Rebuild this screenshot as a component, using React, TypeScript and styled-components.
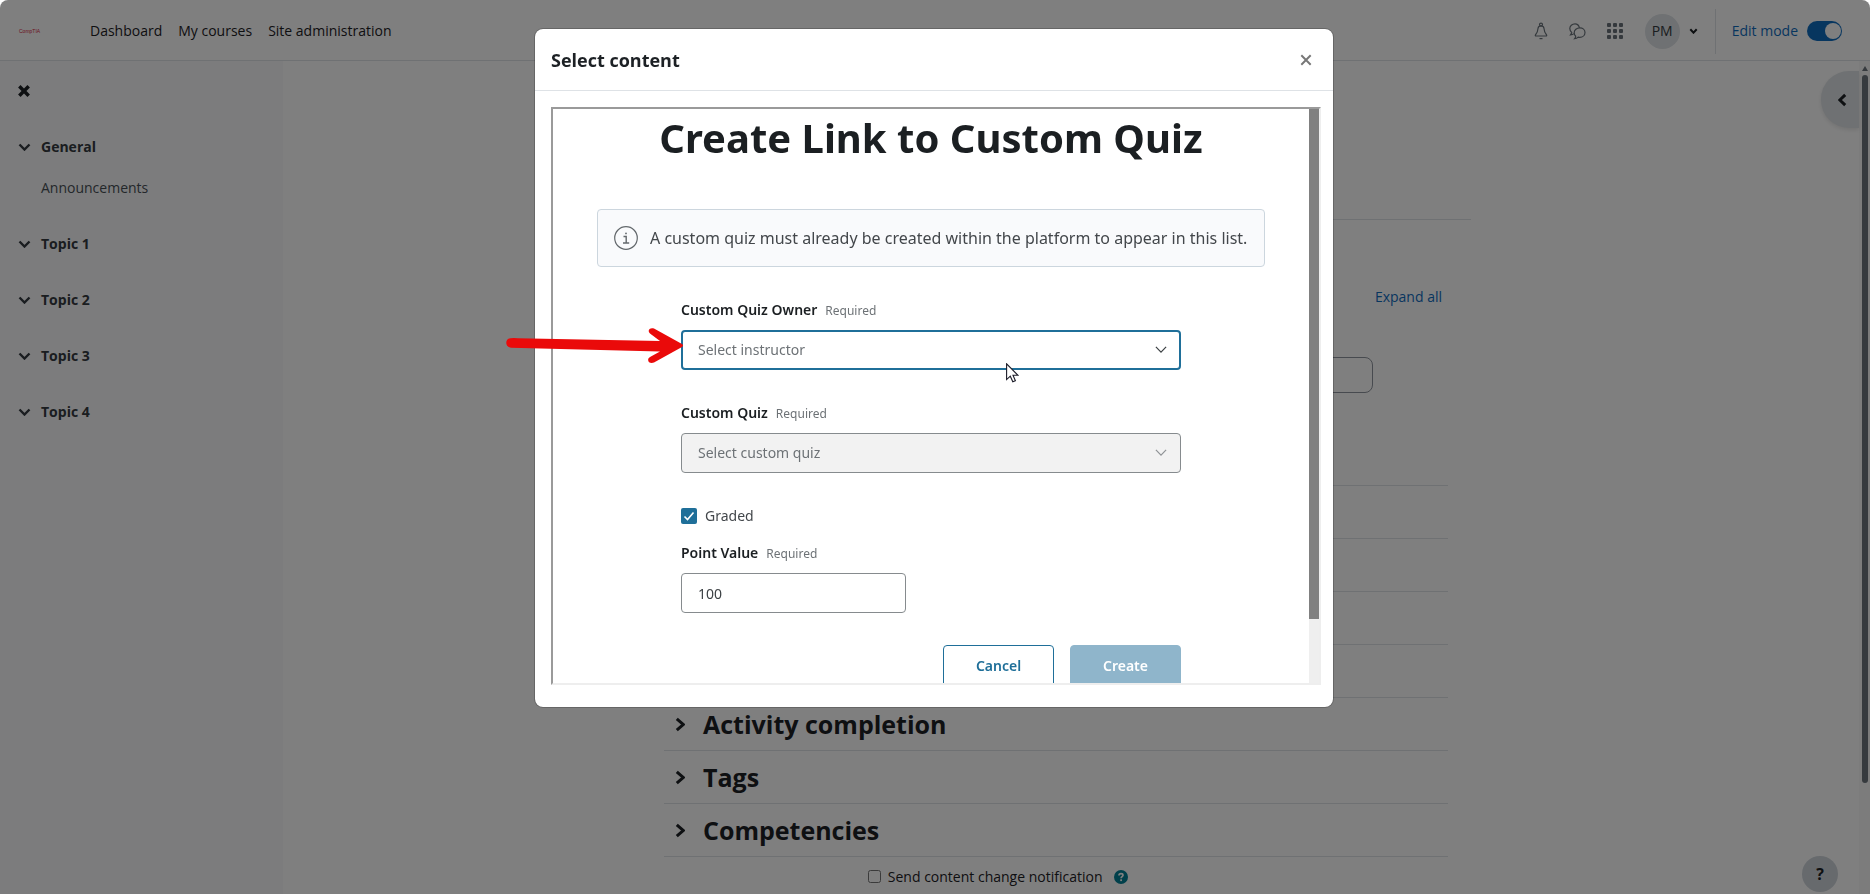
import React from 'react';
import styled, { createGlobalStyle, css } from 'styled-components';

const Global = createGlobalStyle`
  *, *::before, *::after { box-sizing: border-box; }
  body {
    margin: 0;
    background: #fff;
    color: #1d2125;
    font: 14px/20px "Open Sans", "Noto Sans", sans-serif;
  }
  button, input, select { font: inherit; color: inherit; margin: 0; }
  h1, h2, h3, ul { margin: 0; padding: 0; }
`;

/* ---------- page behind the dialog ---------- */

const Page = styled.div`
  height: 100vh;
  min-height: 600px;
  display: flex;
  flex-direction: column;
  overflow: hidden;
`;

const TopBar = styled.header`
  flex: none;
  height: 61px;
  display: flex;
  align-items: center;
  padding: 2px 28px 0 19px;
  border-bottom: 1px solid #dee2e6;
`;

const Logo = styled.a`
  width: 71px;
  font: 400 5px/8px "Liberation Sans", sans-serif;
  color: #d8273f;
  text-decoration: none;
`;

const MainNav = styled.nav`
  display: flex;
  gap: 16px;
  margin-right: auto;
  a { color: #1d2125; text-decoration: none; }
`;

const IconButton = styled.button`
  display: flex;
  align-items: center;
  justify-content: center;
  padding: 0;
  border: 0;
  background: none;
  color: #1d2125;
`;

const Tools = styled.div`
  display: flex;
  align-items: center;
  gap: 21px;
`;

const UserMenu = styled(IconButton)`
  gap: 9px;
  padding-right: 17px;
`;

const Avatar = styled.span`
  display: grid;
  place-items: center;
  width: 35px;
  height: 35px;
  border-radius: 50%;
  background: #dee2e6;
  color: #343a40;
`;

const EditMode = styled.label`
  display: flex;
  align-items: center;
  gap: 9px;
  height: 45px;
  padding-left: 16px;
  border-left: 1px solid #dee2e6;
  color: #0f6cbf;
`;

const Switch = styled.input`
  appearance: none;
  width: 35px;
  height: 20px;
  border-radius: 10px;
  background: #0f6cbf;
  display: flex;
  justify-content: flex-end;
  align-items: center;
  padding: 1px;
  &::before {
    content: '';
    width: 16px;
    height: 16px;
    border-radius: 50%;
    background: #fff;
  }
`;

const Columns = styled.div`
  flex: 1;
  min-height: 0;
  display: flex;
`;

const Sidebar = styled.aside`
  flex: none;
  width: 283px;
  padding: 24px 18px;
  background: #f8f9fa;
`;

const CourseIndex = styled.ul`
  list-style: none;
  margin-top: 40px;
  display: flex;
  flex-direction: column;
  gap: 36px;
`;

const Topic = styled.button`
  display: flex;
  align-items: center;
  gap: 10px;
  padding: 0;
  border: 0;
  background: none;
  font-weight: 700;
  color: #343a40;
`;

const Activity = styled.a`
  display: block;
  margin: 21px 0 0 23px;
  color: #495057;
  text-decoration: none;
`;

const Main = styled.main`
  flex: 1;
  min-width: 0;
  display: flex;
  flex-direction: column;
  align-items: center;
  padding: 158px 30px 0 0;
`;

const Settings = styled.form`
  width: 100%;
  max-width: 830px;
  padding: 0 23px;
  border-top: 1px solid #dee2e6;
`;

const General = styled.div`
  height: 265px;
  padding: 67px 6px 0 0;
  display: flex;
  flex-direction: column;
  align-items: flex-end;
  a { color: #0f6cbf; text-decoration: none; }
`;

const NameInput = styled.input`
  width: 480px;
  height: 36px;
  margin: 50px 69px 0 0;
  border: 1px solid #8f959e;
  border-radius: 8px;
  background: #fff;
`;

const Section = styled.div`
  height: 53px;
  border-top: 1px solid #dee2e6;
  display: flex;
  align-items: center;
`;

const SectionTitle = styled.h3`
  font-size: 25px;
  line-height: 34px;
  button {
    display: flex;
    align-items: center;
    gap: 18px;
    padding: 0 0 0 11px;
    border: 0;
    background: none;
  }
`;

const Notify = styled.div`
  height: 40px;
  border-top: 1px solid #dee2e6;
  display: flex;
  align-items: center;
  padding-left: 26%;
  label { display: flex; align-items: center; gap: 7px; margin-right: 12px; }
  input { width: 13px; height: 13px; }
`;

const DrawerToggle = styled(IconButton)`
  position: absolute;
  right: 11px;
  top: 71px;
  width: 38px;
  height: 57px;
  padding-left: 5px;
  border-radius: 28px 0 0 28px;
  background: #dee2e6;
  box-shadow: 0 2px 4px rgba(0, 0, 0, 0.1);
`;

const HelpButton = styled(IconButton)`
  position: absolute;
  right: 32px;
  bottom: 2px;
  width: 36px;
  height: 36px;
  border-radius: 50%;
  background: #ced4da;
  font: 700 16px/20px "Open Sans", sans-serif;
`;

const PageScroll = styled.div`
  flex: none;
  width: 11px;
  background: #f8f8f8;
  display: flex;
  flex-direction: column;
  align-items: center;
  gap: 4px;
  padding: 5px 0 111px;
  &::after {
    content: '';
    width: 6px;
    flex: 1;
    border-radius: 3px;
    background: #6c757d;
  }
`;

/* ---------- dialog ---------- */

const Backdrop = styled.div`
  position: fixed;
  inset: 0;
  display: flex;
  justify-content: center;
  align-items: flex-start;
  padding: 28px 2px 0 0;
  background: rgba(0, 0, 0, 0.5);
  border-radius: 8px 8px 0 0;
`;

const Dialog = styled.section`
  position: relative;
  width: 100%;
  max-width: 800px;
  border: 1px solid rgba(0, 0, 0, 0.2);
  border-radius: 9px;
  background: #fff;
  background-clip: padding-box;
`;

const DialogHead = styled.header`
  display: flex;
  align-items: center;
  justify-content: space-between;
  height: 62px;
  padding: 0 21px 0 16px;
  border-bottom: 1px solid #dee2e6;
  h2 { font-size: 18px; line-height: 28px; }
`;

const DialogBody = styled.div`
  padding: 16px 12px 22px 16px;
`;

const Frame = styled.div`
  display: flex;
  height: 578px;
  overflow: hidden;
  border: 2px solid;
  border-color: #9a9a9a #eee #eee #9a9a9a;
  font-family: "Noto Sans", sans-serif;
`;

const FrameScroll = styled.div`
  flex: none;
  width: 10px;
  background: #efefef;
  &::before {
    content: '';
    display: block;
    height: 510px;
    background: #808080;
  }
`;

const FrameContent = styled.div`
  flex: 1;
  min-width: 0;
  display: flex;
  flex-direction: column;
  align-items: center;
  > * { flex: none; }
`;

const Title = styled.h1`
  font-size: 40px;
  line-height: 58px;
  color: #1b1f22;
`;

const Notice = styled.p`
  align-self: stretch;
  display: flex;
  align-items: center;
  gap: 12px;
  height: 58px;
  margin: 42px 44px 33px;
  padding: 0 16px;
  border: 1px solid #ccd6de;
  border-radius: 4px;
  background: #f9fafc;
  font-size: 16px;
  line-height: 24px;
  color: #43474b;
  white-space: nowrap;
`;

const QuizForm = styled.form`
  width: 100%;
  max-width: 500px;
`;

const Field = styled.div<{ $gap: number }>`
  display: flex;
  flex-direction: column;
  align-items: flex-start;
  gap: 10px;
  margin-bottom: ${(p) => p.$gap}px;
`;

const FieldLabel = styled.label`
  display: flex;
  align-items: baseline;
  gap: 8px;
  height: 20px;
  font-weight: 600;
  color: #1b1f22;
  small { font-size: 12px; font-weight: 400; color: #6d7276; }
`;

const box = css`
  height: 40px;
  border: 1px solid #868b8e;
  border-radius: 4px;
  background: #fff;
  padding: 0 16px;
`;

const Picker = styled.div<{ $off?: boolean }>`
  position: relative;
  width: 100%;
  svg {
    position: absolute;
    right: 14px;
    top: 16px;
    pointer-events: none;
    color: ${(p) => (p.$off ? '#8f9396' : '#3c4144')};
  }
`;

const Select = styled.select<{ $focus?: boolean }>`
  ${box}
  display: block;
  width: 100%;
  appearance: none;
  color: #6d7276;
  opacity: 1;
  &:disabled { background: #f2f2f2; color: #6d7276; opacity: 1; }
  ${(p) => p.$focus && css`
    border: 2px solid #1f6f99;
    padding: 0 15px;
  `}
`;

const TextInput = styled.input`
  ${box}
  width: 225px;
  color: #3c4144;
`;

const Check = styled.label`
  display: flex;
  align-items: center;
  gap: 8px;
  height: 20px;
  margin-bottom: 17px;
  color: #43474b;
`;

const CheckBox = styled.span`
  display: grid;
  width: 16px;
  height: 16px;
  input, svg { grid-area: 1 / 1; width: 16px; height: 16px; }
  input { appearance: none; border-radius: 2px; background: #1f6f99; }
  svg { z-index: 1; pointer-events: none; }
`;

const Actions = styled.div`
  display: flex;
  justify-content: flex-end;
  gap: 16px;
`;

const ActionButton = styled.button<{ $primary?: boolean }>`
  width: 111px;
  height: 42px;
  border: 1px solid ${(p) => (p.$primary ? '#8fb5cb' : '#1f6f99')};
  border-radius: 4px;
  background: ${(p) => (p.$primary ? '#8fb5cb' : '#fff')};
  color: ${(p) => (p.$primary ? '#fff' : '#1f6f99')};
  font-weight: 600;
`;

const Pointer = styled.svg`
  position: absolute;
  left: 471px;
  top: 334px;
`;

const Arrow = styled.svg`
  position: absolute;
  left: -30px;
  top: 297px;
  overflow: visible;
`;

/* ---------- icons ---------- */

type ChevronProps = { dir: 'down' | 'left' | 'right'; w: number; h: number; stroke?: number };

const chevrons = { down: [0, 0, 0.5, 1, 1, 0], left: [1, 0, 0, 0.5, 1, 1], right: [0, 0, 1, 0.5, 0, 1] };

function Chevron({ dir, w, h, stroke = 2 }: ChevronProps) {
  const p = stroke / 2 + 0.3;
  const c = chevrons[dir];
  const x = (v: number) => p + v * (w - 2 * p);
  const y = (v: number) => p + v * (h - 2 * p);
  return (
    <svg width={w} height={h} fill="none" stroke="currentColor" strokeWidth={stroke} aria-hidden="true">
      <path d={`M${x(c[0])} ${y(c[1])}L${x(c[2])} ${y(c[3])}L${x(c[4])} ${y(c[5])}`} />
    </svg>
  );
}

const Bell = () => (
  <svg width="14" height="18" viewBox="0 0 14 18" fill="none" stroke="#6a737b" strokeWidth="1.2">
    <circle cx="7" cy="2.6" r="1.5" />
    <path d="M4 6.500C4.200 4.700 5.400 3.900 7 3.900s2.800.8 3 2.600c.2 3 .8 4.500 2.600 6.500.3.500 0 1-.5 1H1.900c-.5 0-.8-.5-.5-1C3.200 11 3.800 9.500 4 6.500Z" />
    <path d="M5.500 16.600h3" />
  </svg>
);

const Chat = () => (
  <svg width="17" height="17" viewBox="0 0 17 17" fill="none" stroke="#6a737b" strokeWidth="1.2">
    <path d="M10.500 4.800C9.900 2.400 8.200.8 6 .8 3.100.8.800 2.900.800 5.600c0 1.600.7 2.900 1.900 3.800-.1 1-.5 1.700-1.200 2.500 1.500-.1 2.600-.5 3.500-1.300" />
    <path d="M10.800 4.900c2.900 0 5.200 2 5.200 4.600 0 2.700-2.300 4.800-5.200 4.800-.6 0-1.100-.1-1.600-.2-.9.900-2 1.500-3.600 1.600.7-.8 1-1.500 1.100-2.500-.9-.8-1.500-2-1.500-3.500C5.200 7 7.800 4.900 10.800 4.900Z" />
  </svg>
);

const Grid = () => (
  <svg width="17" height="17" fill="#6a737b">
    {[0, 6, 12].map((y) => [0, 6, 12].map((x) => <rect key={`${x}-${y}`} x={x} y={y} width="4" height="4" rx="1" />))}
  </svg>
);

const Cross = ({ size, stroke, color }: { size: number; stroke: number; color: string }) => (
  <svg width={size} height={size} viewBox="0 0 11 11" stroke={color} strokeWidth={stroke}>
    <path d="M1.200 1.200l8.600 8.600M9.800 1.200l-8.600 8.600" />
  </svg>
);

const Info = () => (
  <svg width="24" height="24" fill="none" stroke="#63686c" strokeWidth="1.2">
    <circle cx="12" cy="12" r="11.3" />
    <path d="M9.500 10.500h2.700v6.300M9 17h6.200" strokeWidth="1.4" />
    <circle cx="12" cy="7.4" r="0.9" fill="#63686c" stroke="none" />
  </svg>
);

const Help = () => (
  <svg width="14" height="14" viewBox="0 0 14 14" fill="none">
    <circle cx="7" cy="7" r="7" fill="#008196" />
    <path d="M5 5.400C5 4.200 5.900 3.600 7 3.600s2 .6 2 1.600c0 1.400-1.900 1.400-1.900 3" stroke="#fff" strokeWidth="1.7" />
    <rect x="6.2" y="9.3" width="1.8" height="1.8" fill="#fff" />
  </svg>
);

const topics = ['General', 'Topic 1', 'Topic 2', 'Topic 3', 'Topic 4'];
const sections = ['', '', '', '', 'Activity completion', 'Tags', 'Competencies'];

export default function App() {
  return (
    <>
      <Global />
      <Page>
        <TopBar>
          <Logo href="#">CompTIA</Logo>
          <MainNav>
            <a href="#">Dashboard</a>
            <a href="#">My courses</a>
            <a href="#">Site administration</a>
          </MainNav>
          <Tools>
            <IconButton type="button"><Bell /></IconButton>
            <IconButton type="button"><Chat /></IconButton>
            <IconButton type="button"><Grid /></IconButton>
            <UserMenu type="button">
              <Avatar>PM</Avatar>
              <Chevron dir="down" w={9} h={6} />
            </UserMenu>
          </Tools>
          <EditMode>
            Edit mode
            <Switch type="checkbox" role="switch" defaultChecked />
          </EditMode>
        </TopBar>
        <Columns>
          <Sidebar>
            <IconButton type="button"><Cross size={12} stroke={3.2} color="#1d2125" /></IconButton>
            <CourseIndex>
              {topics.map((t) => (
                <li key={t}>
                  <Topic type="button"><Chevron dir="down" w={13} h={8} stroke={2.4} />{t}</Topic>
                  {t === 'General' && <Activity href="#">Announcements</Activity>}
                </li>
              ))}
            </CourseIndex>
          </Sidebar>
          <Main>
            <Settings>
              <General>
                <a href="#">Expand all</a>
                <NameInput type="text" />
              </General>
              {sections.map((s, i) => (
                <Section key={i}>
                  {s && (
                    <SectionTitle>
                      <button type="button"><Chevron dir="right" w={10} h={15} stroke={3} />{s}</button>
                    </SectionTitle>
                  )}
                </Section>
              ))}
              <Notify>
                <label><input type="checkbox" />Send content change notification</label>
                <Help />
              </Notify>
            </Settings>
          </Main>
          <PageScroll>
            <svg width="6" height="5" fill="#6c757d"><path d="M3 0l3 5H0Z" /></svg>
          </PageScroll>
        </Columns>
        <DrawerToggle type="button"><Chevron dir="left" w={9} h={14} stroke={3} /></DrawerToggle>
        <HelpButton type="button">?</HelpButton>
      </Page>

      <Backdrop>
        <Dialog role="dialog" aria-modal="true" aria-labelledby="dialog-title">
          <DialogHead>
            <h2 id="dialog-title">Select content</h2>
            <IconButton type="button"><Cross size={12} stroke={1.8} color="#777" /></IconButton>
          </DialogHead>
          <DialogBody>
            <Frame>
              <FrameContent>
                <Title>Create Link to Custom Quiz</Title>
                <Notice><Info />A custom quiz must already be created within the platform to appear in this list.</Notice>
                <QuizForm>
                  <Field $gap={33}>
                    <FieldLabel htmlFor="owner">Custom Quiz Owner <small>Required</small></FieldLabel>
                    <Picker>
                      <Select id="owner" $focus><option>Select instructor</option></Select>
                      <Chevron dir="down" w={12} h={7} stroke={1.2} />
                    </Picker>
                  </Field>
                  <Field $gap={33}>
                    <FieldLabel htmlFor="quiz">Custom Quiz <small>Required</small></FieldLabel>
                    <Picker $off>
                      <Select id="quiz" disabled><option>Select custom quiz</option></Select>
                      <Chevron dir="down" w={12} h={7} stroke={1.2} />
                    </Picker>
                  </Field>
                  <Check>
                    <CheckBox>
                      <input type="checkbox" defaultChecked />
                      <svg viewBox="0 0 16 16" fill="none" stroke="#fff" strokeWidth="1.6"><path d="M3.500 8.500l3 3L12.500 4.500" /></svg>
                    </CheckBox>
                    Graded
                  </Check>
                  <Field $gap={32}>
                    <FieldLabel htmlFor="points">Point Value <small>Required</small></FieldLabel>
                    <TextInput id="points" defaultValue="100" />
                  </Field>
                  <Actions>
                    <ActionButton type="button">Cancel</ActionButton>
                    <ActionButton type="button" $primary>Create</ActionButton>
                  </Actions>
                </QuizForm>
              </FrameContent>
              <FrameScroll />
            </Frame>
          </DialogBody>
          <Arrow width="180" height="40" viewBox="0 0 180 40" fill="none" aria-hidden="true">
            <path d="M5.500 12.200Q8 12 13 12.200L155 15 145 7.500C142 5 144.500 1 149 2.500L177 18Q179 19.500 177 21L149 36.500C144 38.500 141 33.500 145 31L155 25.500 6 21.800C-.500 21 0 12.500 5.500 12.200Z" fill="#ea0a0a" />
          </Arrow>
          <Pointer width="13" height="20" viewBox="0 0 13 20" aria-hidden="true">
            <path d="M.6.800V16.600L4.300 13.200 6.800 18.800 9.400 17.700 7 12.300H12Z" fill="#fff" stroke="#1c1c28" strokeWidth="1.1" />
          </Pointer>
        </Dialog>
      </Backdrop>
    </>
  );
}
